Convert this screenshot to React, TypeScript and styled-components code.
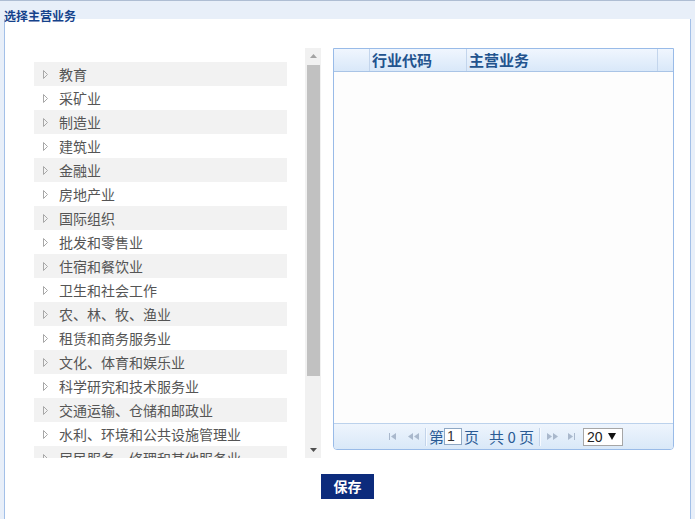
import React from "react";
import styled, { createGlobalStyle } from "styled-components";

const GlobalStyle = createGlobalStyle`
  html, body { margin: 0; padding: 0; }
  body {
    background: #e8eff9;
    font-family: "Noto Sans CJK SC", "Microsoft YaHei", sans-serif;
  }
`;

const Window = styled.div`
  height: 519px;
  box-sizing: border-box;
  border-top: 1px solid #aebdd3;
  padding: 0 4px;
  background: #e8eff9;
`;

const TitleBar = styled.div`
  height: 18px;
`;

const Title = styled.h1`
  margin: 0;
  padding-top: 8px;
  font-size: 12px;
  line-height: 14px;
  font-weight: bold;
  color: #15428b;
  white-space: nowrap;
`;

const Panel = styled.div`
  height: 500px;
  box-sizing: border-box;
  background: #fff;
  border-left: 1px solid #a3c0e8;
  border-right: 1px solid #a3c0e8;
  padding-top: 29px;
  text-align: center;
`;

const Main = styled.div`
  display: flex;
  align-items: flex-start;
  gap: 12px;
  margin-left: 15px;
  text-align: left;
`;

const ListFrame = styled.div`
  display: flex;
  width: 301px;
  height: 410px;
`;

const ListViewport = styled.div`
  width: 285px;
  height: 410px;
  box-sizing: border-box;
  overflow: hidden;
  padding: 14px 18px 0 14px;
`;

const ScrollTrack = styled.div`
  width: 16px;
  height: 410px;
  background: #f1f1f1;
  display: flex;
  flex-direction: column;
`;

const ScrollButton = styled.div`
  height: 16px;
  flex-shrink: 0;
  display: flex;
  align-items: center;
  justify-content: center;
`;

const ThumbArea = styled.div`
  flex: 1;
  padding-top: 1px;
`;

const Thumb = styled.div`
  height: 311px;
  margin: 0 1px 0 2px;
  background: #c1c1c1;
`;

const Row = styled.div<{ $alt: boolean }>`
  height: 24px;
  display: flex;
  align-items: center;
  padding-left: 9px;
  background: ${(p) => (p.$alt ? "#f2f2f2" : "transparent")};
  font-size: 14px;
  line-height: 24px;
  color: #555;
  white-space: nowrap;
  cursor: pointer;
`;

const RowArrow = styled.svg`
  flex-shrink: 0;
  margin-right: 11px;
`;

const Grid = styled.div`
  width: 341px;
  height: 402px;
  box-sizing: border-box;
  border: 1px solid #99bbe8;
  border-radius: 0 0 4px 4px;
  display: flex;
  flex-direction: column;
  overflow: hidden;
  background: #fff;
`;

const Header = styled.div`
  height: 23px;
  box-sizing: border-box;
  border-bottom: 1px solid #a9c4e6;
  display: flex;
  background: linear-gradient(#f0f6fe, #d9e8f9);
`;

const HeaderCell = styled.div<{ $w?: number }>`
  ${(p) => (p.$w ? `width: ${p.$w}px;` : "flex: 1;")}
  box-sizing: border-box;
  border-right: ${(p) => (p.$w ? "1px solid #c3d5ec" : "none")};
  padding-left: 2px;
  font-size: 15px;
  font-weight: bold;
  line-height: 22px;
  color: #22538e;
  white-space: nowrap;
`;

const Body = styled.div`
  flex: 1;
  background: #fdfdfd;
`;

const Pager = styled.div`
  height: 26px;
  box-sizing: border-box;
  border-top: 1px solid #bcd2ec;
  background: linear-gradient(#eef5fd, #d9e8f8);
  display: flex;
  align-items: center;
  padding-left: 55px;
  font-size: 15px;
  color: #2a5b95;
  white-space: nowrap;
`;

const PagerIcon = styled.svg<{ $ml?: number }>`
  flex-shrink: 0;
  margin-left: ${(p) => p.$ml ?? 0}px;
`;

const Sep = styled.span<{ $ml: number; $mr: number }>`
  width: 1px;
  height: 18px;
  background: #c3d4ea;
  border-right: 1px solid #f6faff;
  margin-left: ${(p) => p.$ml}px;
  margin-right: ${(p) => p.$mr}px;
`;

const PagerText = styled.span<{ $ml?: number }>`
  margin-left: ${(p) => p.$ml ?? 0}px;
  line-height: 20px;
`;

const PageInput = styled.span`
  width: 18px;
  height: 17px;
  box-sizing: border-box;
  border: 1px solid #8ea7c4;
  background: #fff;
  font-family: "Liberation Sans", Arial, sans-serif;
  font-size: 14px;
  line-height: 15px;
  color: #333;
  padding-left: 2px;
`;

const SizeSelect = styled.span`
  width: 40px;
  height: 18px;
  box-sizing: border-box;
  margin-left: 8px;
  border: 1px solid #a6a6a6;
  background: #fff;
  display: flex;
  align-items: center;
  padding-left: 3px;
  gap: 5px;
  font-family: "Liberation Sans", Arial, sans-serif;
  font-size: 14px;
  color: #222;
`;

const SaveButton = styled.button`
  display: inline-block;
  margin-top: 16px;
  width: 53px;
  height: 25px;
  border: none;
  border-radius: 0;
  padding: 0;
  background: #0c2b7c;
  color: #fff;
  font-family: "Noto Sans CJK SC", "Microsoft YaHei", sans-serif;
  font-size: 14px;
  font-weight: bold;
  line-height: 25px;
  cursor: pointer;
  vertical-align: top;
`;

const industries = [
  "教育",
  "采矿业",
  "制造业",
  "建筑业",
  "金融业",
  "房地产业",
  "国际组织",
  "批发和零售业",
  "住宿和餐饮业",
  "卫生和社会工作",
  "农、林、牧、渔业",
  "租赁和商务服务业",
  "文化、体育和娱乐业",
  "科学研究和技术服务业",
  "交通运输、仓储和邮政业",
  "水利、环境和公共设施管理业",
  "居民服务、修理和其他服务业",
  "信息传输、软件和信息技术服务业",
  "电力、热力、燃气及水生产和供应业",
  "公共管理、社会保障和社会组织",
];

export default function App() {
  return (
    <>
      <GlobalStyle />
      <Window>
        <TitleBar>
          <Title>选择主营业务</Title>
        </TitleBar>
        <Panel>
          <Main>
            <ListFrame>
              <ListViewport>
                {industries.map((name, i) => (
                  <Row key={name} $alt={i % 2 === 0}>
                    <RowArrow width="5" height="9" viewBox="0 0 5 9">
                      <polygon points="0.5,0.5 4.5,4.5 0.5,8.5" fill="none" stroke="#a8a8a8" strokeWidth="1" />
                    </RowArrow>
                    {name}
                  </Row>
                ))}
              </ListViewport>
              <ScrollTrack>
                <ScrollButton>
                  <svg width="7" height="4" viewBox="0 0 7 4">
                    <polygon points="0,4 3.5,0 7,4" fill="#a3a3a3" />
                  </svg>
                </ScrollButton>
                <ThumbArea>
                  <Thumb />
                </ThumbArea>
                <ScrollButton>
                  <svg width="7" height="4" viewBox="0 0 7 4">
                    <polygon points="0,0 7,0 3.5,4" fill="#505050" />
                  </svg>
                </ScrollButton>
              </ScrollTrack>
            </ListFrame>
            <Grid>
              <Header>
                <HeaderCell $w={36} />
                <HeaderCell $w={97}>行业代码</HeaderCell>
                <HeaderCell $w={191}>主营业务</HeaderCell>
                <HeaderCell />
              </Header>
              <Body />
              <Pager>
                <PagerIcon width="7" height="7" viewBox="0 0 7 7">
                  <rect x="0" y="0" width="1" height="7" fill="#a9b8cc" />
                  <polygon points="7,0 2,3.5 7,7" fill="#a9b8cc" />
                </PagerIcon>
                <PagerIcon $ml={12} width="11" height="7" viewBox="0 0 11 7">
                  <polygon points="5,0 0,3.5 5,7" fill="#a9b8cc" />
                  <polygon points="11,0 6,3.5 11,7" fill="#a9b8cc" />
                </PagerIcon>
                <Sep $ml={6} $mr={2} />
                <PagerText>第</PagerText>
                <PageInput>1</PageInput>
                <PagerText $ml={2}>页</PagerText>
                <PagerText $ml={10}>共 0 页</PagerText>
                <Sep $ml={5} $mr={0} />
                <PagerIcon $ml={6} width="11" height="7" viewBox="0 0 11 7">
                  <polygon points="0,0 5,3.5 0,7" fill="#a9b8cc" />
                  <polygon points="6,0 11,3.5 6,7" fill="#a9b8cc" />
                </PagerIcon>
                <PagerIcon $ml={10} width="7" height="7" viewBox="0 0 7 7">
                  <polygon points="0,0 5,3.5 0,7" fill="#a9b8cc" />
                  <rect x="6" y="0" width="1" height="7" fill="#a9b8cc" />
                </PagerIcon>
                <SizeSelect>
                  20
                  <svg width="8" height="7" viewBox="0 0 8 7">
                    <polygon points="0,0 8,0 4,7" fill="#111" />
                  </svg>
                </SizeSelect>
              </Pager>
            </Grid>
          </Main>
          <SaveButton>保存</SaveButton>
        </Panel>
      </Window>
    </>
  );
}
